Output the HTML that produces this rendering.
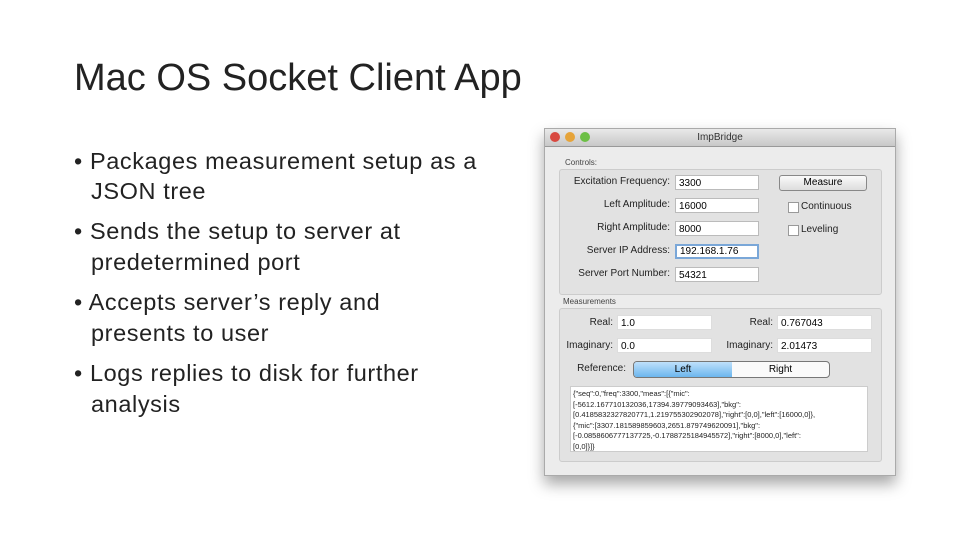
<!DOCTYPE html>
<html><head><style>
body{margin:0;width:960px;height:540px;background:#fff;position:relative;overflow:hidden;font-family:"Liberation Sans",sans-serif}
.t{position:absolute;left:74px;top:57px;font-size:38px;color:#222;letter-spacing:0px}
.b{position:absolute;left:74px;font-size:23.5px;color:#222;white-space:nowrap;letter-spacing:0.6px}
.a{position:absolute;font-size:10px;color:#222;white-space:nowrap}
.f{position:absolute;background:#fff;border:1px solid #bbb;height:15px;font-size:10px;line-height:15px;padding-left:3px;box-sizing:border-box}
.l{position:absolute;font-size:10px;color:#222;text-align:right;white-space:nowrap}
</style></head><body>
<div class="t">Mac OS Socket Client App</div>
<div class="b" style="top:148px">• Packages measurement setup as a</div>
<div class="b" style="top:178px;left:91px">JSON tree</div>
<div class="b" style="top:218px">• Sends the setup to server at</div>
<div class="b" style="top:249px;left:91px">predetermined port</div>
<div class="b" style="top:289px">• Accepts server’s reply and</div>
<div class="b" style="top:320px;left:91px">presents to user</div>
<div class="b" style="top:360px">• Logs replies to disk for further</div>
<div class="b" style="top:391px;left:91px">analysis</div>

<div style="position:absolute;left:544px;top:128px;width:350px;height:346px;background:#ececec;border:1px solid #aaa;box-shadow:0 8px 14px rgba(0,0,0,.35)">
<div style="height:17px;background:linear-gradient(#e9e9e9,#c8c8c8);border-bottom:1px solid #999;text-align:center;font-size:10px;line-height:17px;color:#333">ImpBridge</div>
<div style="position:absolute;left:5px;top:3px;width:10px;height:10px;border-radius:50%;background:#d8483f"></div>
<div style="position:absolute;left:20px;top:3px;width:10px;height:10px;border-radius:50%;background:#e6a43a"></div>
<div style="position:absolute;left:35px;top:3px;width:10px;height:10px;border-radius:50%;background:#6cbf45"></div>
<div class="a" style="left:20px;top:29px;font-size:8px;color:#444">Controls:</div>
<div style="position:absolute;left:14px;top:40px;width:321px;height:124px;background:#e2e2e2;border:1px solid #ccc;border-radius:3px"></div>
<div class="a" style="left:18px;top:168px;font-size:8px;color:#444">Measurements</div>
<div style="position:absolute;left:14px;top:179px;width:321px;height:152px;background:#e2e2e2;border:1px solid #ccc;border-radius:3px"></div>
</div>
<div class="l" style="left:560px;width:110px;top:176px">Excitation Frequency:</div>
<div class="l" style="left:560px;width:110px;top:199px">Left Amplitude:</div>
<div class="l" style="left:560px;width:110px;top:222px">Right Amplitude:</div>
<div class="l" style="left:560px;width:110px;top:245px">Server IP Address:</div>
<div class="l" style="left:560px;width:110px;top:268px">Server Port Number:</div>
<div class="f" style="left:675px;top:175px;width:84px">3300</div>
<div class="f" style="left:675px;top:198px;width:84px">16000</div>
<div class="f" style="left:675px;top:221px;width:84px">8000</div>
<div class="f" style="left:675px;top:244px;width:84px;border:2px solid #7aa7d8;line-height:12px">192.168.1.76</div>
<div class="f" style="left:675px;top:267px;width:84px">54321</div>
<div style="position:absolute;left:779px;top:175px;width:86px;height:14px;border:1px solid #888;border-radius:3px;background:linear-gradient(#fafafa,#ddd);font-size:10px;text-align:center;line-height:14px">Measure</div>
<div style="position:absolute;left:788px;top:202px;width:9px;height:9px;border:1px solid #999;background:#fff"></div>
<div class="a" style="left:801px;top:201px">Continuous</div>
<div style="position:absolute;left:788px;top:225px;width:9px;height:9px;border:1px solid #999;background:#fff"></div>
<div class="a" style="left:801px;top:224px">Leveling</div>
<div class="l" style="left:560px;width:53px;top:317px">Real:</div>
<div class="l" style="left:560px;width:53px;top:340px">Imaginary:</div>
<div class="l" style="left:720px;width:53px;top:317px">Real:</div>
<div class="l" style="left:720px;width:53px;top:340px">Imaginary:</div>
<div class="f" style="left:617px;top:315px;width:95px;border-color:#ddd">1.0</div>
<div class="f" style="left:617px;top:338px;width:95px;border-color:#ddd">0.0</div>
<div class="f" style="left:777px;top:315px;width:95px;border-color:#ddd">0.767043</div>
<div class="f" style="left:777px;top:338px;width:95px;border-color:#ddd">2.01473</div>
<div class="l" style="left:560px;width:66px;top:363px">Reference:</div>
<div style="position:absolute;left:633px;top:361px;width:195px;height:15px;border:1px solid #777;border-radius:4px;background:#fafafa;overflow:hidden;font-size:10px;line-height:15px">
<div style="position:absolute;left:0;top:0;width:98px;height:15px;background:linear-gradient(#bfe0fb,#6cb6ee);text-align:center">Left</div>
<div style="position:absolute;left:98px;top:0;width:97px;text-align:center">Right</div></div>
<div style="position:absolute;left:570px;top:386px;width:298px;height:66px;background:#fff;border:1px solid #ccc;font-size:7.5px;line-height:10.5px;padding:2px;box-sizing:border-box;color:#222;white-space:nowrap;overflow:hidden">{"seq":0,"freq":3300,"meas":[{"mic":<br>[-5612.167710132036,17394.39779093463],"bkg":<br>[0.4185832327820771,1.219755302902078],"right":[0,0],"left":[16000,0]},<br>{"mic":[3307.181589859603,2651.879749620091],"bkg":<br>[-0.0858606777137725,-0.1788725184945572],"right":[8000,0],"left":<br>[0,0]}]}</div>
</body></html>
